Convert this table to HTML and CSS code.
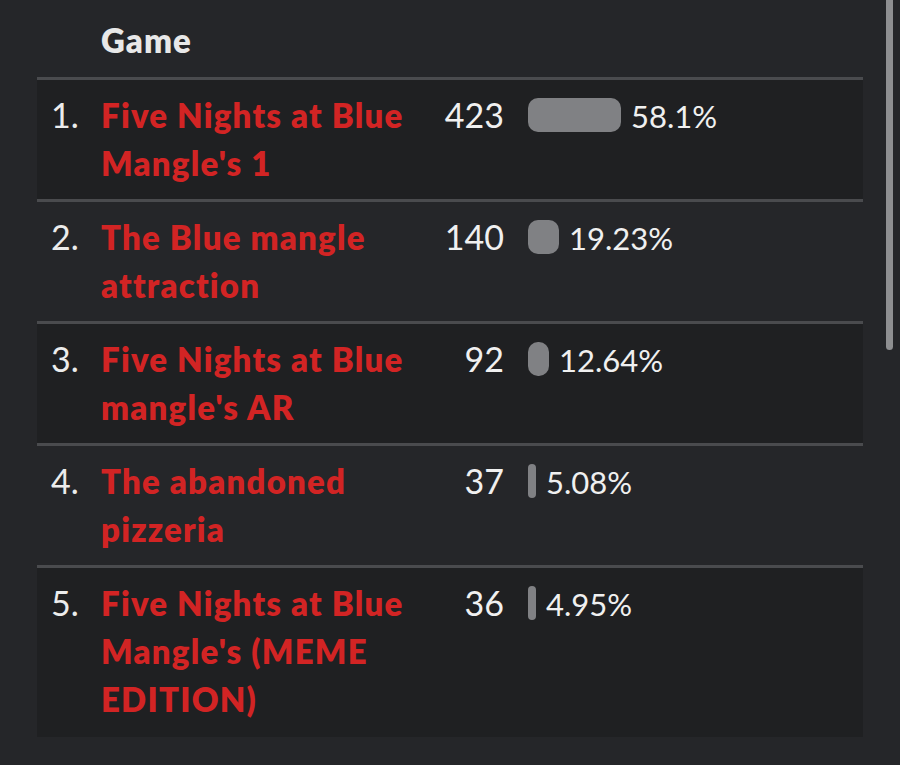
FILE: index.html
```html
<!DOCTYPE html>
<html>
<head>
<meta charset="utf-8">
<link rel="stylesheet" href="styles.css">
</head>
<body>
<div class="page">
  <table class="rank-table">
    <thead>
      <tr>
        <th class="c-rank"></th>
        <th class="c-name">Game</th>
        <th class="c-num"></th>
        <th class="c-bar"></th>
      </tr>
    </thead>
    <tbody>
      <tr class="odd">
        <td class="c-rank">1.</td>
        <td class="c-name">Five Nights at Blue Mangle's 1</td>
        <td class="c-num">423</td>
        <td class="c-bar"><div class="bar-wrap"><span class="bar" style="width:93px"></span><span class="pct">58.1%</span></div></td>
      </tr>
      <tr>
        <td class="c-rank">2.</td>
        <td class="c-name">The Blue mangle attraction</td>
        <td class="c-num">140</td>
        <td class="c-bar"><div class="bar-wrap"><span class="bar" style="width:31px"></span><span class="pct">19.23%</span></div></td>
      </tr>
      <tr class="odd">
        <td class="c-rank">3.</td>
        <td class="c-name">Five Nights at Blue mangle's AR</td>
        <td class="c-num">92</td>
        <td class="c-bar"><div class="bar-wrap"><span class="bar" style="width:21px"></span><span class="pct">12.64%</span></div></td>
      </tr>
      <tr>
        <td class="c-rank">4.</td>
        <td class="c-name">The abandoned pizzeria</td>
        <td class="c-num">37</td>
        <td class="c-bar"><div class="bar-wrap"><span class="bar" style="width:8px"></span><span class="pct">5.08%</span></div></td>
      </tr>
      <tr class="odd">
        <td class="c-rank">5.</td>
        <td class="c-name">Five Nights at Blue Mangle's (MEME EDITION)</td>
        <td class="c-num">36</td>
        <td class="c-bar"><div class="bar-wrap"><span class="bar" style="width:8px"></span><span class="pct">4.95%</span></div></td>
      </tr>
    </tbody>
  </table>
</div>
<div class="scrollbar"></div>
</body>
</html>
```
FILE: styles.css
```css
html, body {
  margin: 0;
  padding: 0;
  background: #252629;
  height: 100%;
  overflow: hidden;
}
body {
  font-family: "Lato", "Noto Sans", sans-serif;
  color: #ececec;
}
.page {
  padding-left: 37px;
  width: 826px;
}
.rank-table {
  width: 826px;
  border-collapse: collapse;
  table-layout: fixed;
}
.rank-table th {
  font-weight: 800;
  font-size: 33px;
  letter-spacing: 1px;
  line-height: 48px;
  text-align: left;
  color: #e8e8e8;
  padding: 16px 0 13px 0;
  border-bottom: 3px solid #4a4b4e;
}
.rank-table td {
  font-size: 34px;
  line-height: 48px;
  padding: 11px 0 12px 0;
  vertical-align: top;
  border-bottom: 3px solid #4a4b4e;
}
.rank-table tbody tr:last-child td {
  border-bottom: none;
  padding-bottom: 14px;
}
.rank-table tr.odd td {
  background: #1f2022;
}
.c-rank {
  width: 64px;
  box-sizing: border-box;
  padding-left: 14px !important;
  color: #ececec;
  font-weight: 400;
}
.c-name {
  width: 336px;
}
td.c-name {
  color: #d22424;
  font-weight: 800;
  font-size: 33px;
  letter-spacing: 1.2px;
}
.c-num {
  width: 67px;
  text-align: right;
  font-weight: 400;
  color: #f0f0f0;
}
td.c-bar {
  padding-left: 24px !important;
}
.bar-wrap {
  display: flex;
  align-items: center;
  height: 48px;
  gap: 10px;
}
.bar {
  display: block;
  height: 34px;
  background: #808184;
  border-radius: 10px;
  flex: none;
}
.pct {
  font-size: 31px;
  color: #f0f0f0;
  line-height: 48px;
  padding-top: 2px;
}
.scrollbar {
  position: absolute;
  top: 0;
  left: 886px;
  width: 7px;
  height: 350px;
  background: #8e8f91;
  border-radius: 0 0 4px 4px;
}
```
